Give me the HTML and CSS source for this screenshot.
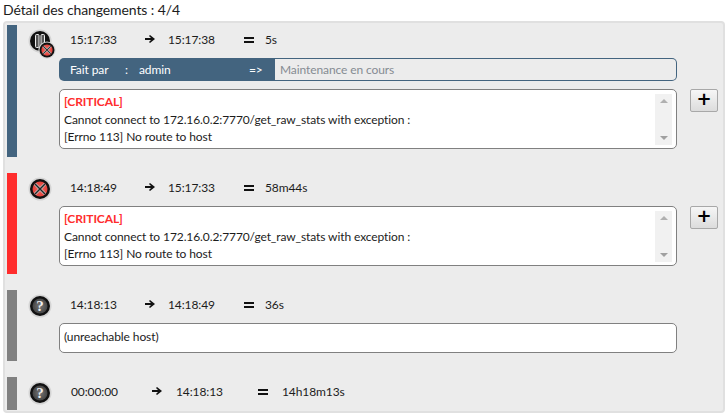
FILE: index.html
```html
<!DOCTYPE html>
<html lang="fr">
<head>
<meta charset="UTF-8">
<meta name="viewport" content="width=device-width, initial-scale=1.0">
<title>Détail des changements</title>
<link rel="stylesheet" href="styles.css">
</head>
<body>

<h4 class="title">Détail des changements : 4/4</h4>

<svg class="defs" width="0" height="0">
    <defs>
        <radialGradient id="red-fill"><stop offset="0" stop-color="#ff6a60"/><stop offset="1" stop-color="#e0403a"/></radialGradient>
        <radialGradient id="grey-fill"><stop offset="0" stop-color="#777"/><stop offset="1" stop-color="#444"/></radialGradient>
        <symbol id="icon-error" viewBox="0 0 24 24">
            <circle cx="12" cy="12" r="11.5" fill="#d4d4d4"/>
            <circle cx="12" cy="12" r="10" fill="#111"/>
            <circle cx="12" cy="12" r="7.5" fill="url(#red-fill)"/>
            <path d="M7 7l10 10M17 7L7 17" stroke="#bbb" stroke-width="3"/>
            <path d="M7 7l10 10M17 7L7 17" stroke="#222" stroke-width="1.4"/>
        </symbol>
        <symbol id="icon-unknown" viewBox="0 0 24 24">
            <circle cx="12" cy="12" r="11.5" fill="#d4d4d4"/>
            <circle cx="12" cy="12" r="10" fill="#111"/>
            <circle cx="12" cy="12" r="7.5" fill="url(#grey-fill)"/>
            <text x="12" y="17" text-anchor="middle" class="icon-mark">?</text>
        </symbol>
        <symbol id="icon-pause" viewBox="0 0 24 24">
            <circle cx="12" cy="12" r="11.5" fill="#d4d4d4"/>
            <circle cx="12" cy="12" r="10" fill="#111"/>
            <rect x="7.5" y="5.5" width="3.5" height="13" rx="1" fill="#555" stroke="#eee"/>
            <rect x="13" y="5.5" width="3.5" height="13" rx="1" fill="#555" stroke="#eee"/>
        </symbol>
        <symbol id="arrow" viewBox="0 0 10 8">
            <path d="M0 3h6L4 1l1-1 5 4-5 4-1-1 2-2H0z" fill="#111"/>
        </symbol>
    </defs>
</svg>

<div class="panel">

    <div class="change change-maint">
        <div class="state">
            <svg class="state-icon"><use href="#icon-pause"/></svg>
            <svg class="state-badge"><use href="#icon-error"/></svg>
        </div>
        <div class="change-body">
            <div class="times">
                <span class="t-start">15:17:33</span>
                <svg class="t-arrow"><use href="#arrow"/></svg>
                <span class="t-end">15:17:38</span>
                <span class="t-equal"></span>
                <span>5s</span>
            </div>
            <div class="done-by">
                <div class="done-label">
                    <span class="done-what">Fait par</span>
                    <span class="done-colon">:</span>
                    <span class="done-user">admin</span>
                    <span>=&gt;</span>
                </div>
                <div class="done-comment">Maintenance en cours</div>
            </div>
            <div class="output-row">
                <div class="output output-tall">
                    <div class="output-text">
                        <span class="critical">[CRITICAL]</span><br>
                        Cannot connect to 172.16.0.2:7770/get_raw_stats with exception :<br>
                        [Errno 113] No route to host
                    </div>
                    <div class="scroll"><span class="scroll-up"></span><span class="scroll-down"></span></div>
                </div>
                <button class="more">+</button>
            </div>
        </div>
    </div>

    <div class="change change-crit">
        <div class="state">
            <svg class="state-icon"><use href="#icon-error"/></svg>
        </div>
        <div class="change-body">
            <div class="times">
                <span class="t-start">14:18:49</span>
                <svg class="t-arrow"><use href="#arrow"/></svg>
                <span class="t-end">15:17:33</span>
                <span class="t-equal"></span>
                <span>58m44s</span>
            </div>
            <div class="output-row">
                <div class="output output-tall">
                    <div class="output-text">
                        <span class="critical">[CRITICAL]</span><br>
                        Cannot connect to 172.16.0.2:7770/get_raw_stats with exception :<br>
                        [Errno 113] No route to host
                    </div>
                    <div class="scroll"><span class="scroll-up"></span><span class="scroll-down"></span></div>
                </div>
                <button class="more">+</button>
            </div>
        </div>
    </div>

    <div class="change change-unknown">
        <div class="state">
            <svg class="state-icon"><use href="#icon-unknown"/></svg>
        </div>
        <div class="change-body">
            <div class="times">
                <span class="t-start">14:18:13</span>
                <svg class="t-arrow"><use href="#arrow"/></svg>
                <span class="t-end">14:18:49</span>
                <span class="t-equal"></span>
                <span>36s</span>
            </div>
            <div class="output-row">
                <div class="output">
                    <div class="output-text">(unreachable host)</div>
                </div>
            </div>
        </div>
    </div>

    <div class="change change-unknown change-last">
        <div class="state">
            <svg class="state-icon"><use href="#icon-unknown"/></svg>
        </div>
        <div class="change-body">
            <div class="times times-wide">
                <span class="t-start">00:00:00</span>
                <svg class="t-arrow"><use href="#arrow"/></svg>
                <span class="t-end">14:18:13</span>
                <span class="t-equal"></span>
                <span>14h18m13s</span>
            </div>
        </div>
    </div>

</div>

</body>
</html>
```

FILE: styles.css
```css
body { margin: 0; padding: 0 1px 0 3px; font-family: Lato, sans-serif; font-size: 12px; letter-spacing: -0.1px; color: #1c1c1c; background-color: #fff; }
.defs { position: absolute; }
.title { margin: 0; height: 21px; line-height: 20px; font-size: 14px; font-weight: normal; }

.panel {
    display: flex;
    flex-direction: column;
    gap: 16px;
    padding: 2px 3px 1px 2px;
    background-color: #ececec;
    border: 2px solid #e0e0e0;
    border-radius: 4px;
}

.change { display: flex; border-left: 10px solid #808080; padding: 4px 0 0; }
.change-maint { border-left-color: #43647f; }
.change-crit { border-left-color: #ff2d2d; }
.change-last .times { margin-bottom: 7px; }

.state { position: relative; width: 42px; flex-shrink: 0; }
.state-icon { position: absolute; left: 11px; top: 0; width: 24px; height: 24px; }
.state-badge { position: absolute; left: 21px; top: 12px; width: 18px; height: 18px; }
.icon-mark { font-family: "Liberation Serif", serif; font-size: 15px; font-weight: bold; fill: #eee; }

.change-body { flex: 1; display: flex; flex-direction: column; }

.times { display: flex; align-items: center; height: 22px; box-sizing: border-box; padding-bottom: 2px; margin-bottom: 7px; padding-left: 11px; }
.t-start { width: 75px; }
.t-arrow { width: 10px; height: 8px; margin-right: 13px; }
.t-end { width: 76px; }
.t-equal {
    width: 10px;
    height: 6px;
    margin-top: 2px;
    margin-right: 11px;
    border-top: 2px solid #111;
    border-bottom: 2px solid #111;
    box-sizing: border-box;
}
.times-wide { padding-left: 12px; }
.times-wide .t-start { width: 81px; }
.times-wide .t-arrow { margin-right: 14px; }
.times-wide .t-end { width: 82px; }
.times-wide .t-equal { margin-right: 14px; }

.done-by { display: flex; height: 23px; margin: 0 43px 8px 0; line-height: 21px; }
.done-label {
    display: flex;
    width: 216px;
    padding-left: 11px;
    box-sizing: border-box;
    background-color: #43647f;
    color: #fff;
    border-radius: 5px 0 0 5px;
    line-height: 23px;
}
.done-what { width: 55px; }
.done-colon { width: 14px; }
.done-user { width: 110px; }
.done-comment {
    flex: 1;
    padding-left: 5px;
    color: #858b92;
    border: 1px solid #43647f;
    border-left: 0;
    border-radius: 0 5px 5px 0;
}

.output-row { display: flex; align-items: flex-start; margin-bottom: 8px; }
.output {
    display: flex;
    justify-content: space-between;
    width: 618px;
    height: 30px;
    box-sizing: border-box;
    padding: 4px;
    background-color: #fff;
    border: 1px solid #808080;
    border-radius: 5px;
    line-height: 17.5px;
}
.output-tall { height: 60px; padding-bottom: 3px; }
.output-tall .output-text { margin-top: -1px; }
.critical { color: #ff2d2d; font-weight: bold; }

.scroll {
    display: flex;
    flex-direction: column;
    justify-content: space-between;
    align-items: center;
    width: 17px;
    padding: 5px 0;
    box-sizing: border-box;
    background-color: #f1f1f1;
}
.scroll-up { border: 4px solid transparent; border-top: 0; border-bottom: 4px solid #b0b0b0; }
.scroll-down { border: 4px solid transparent; border-bottom: 0; border-top: 4px solid #a0a0a0; }

.more {
    width: 28px;
    height: 23px;
    margin-left: 13px;
    padding: 0 0 3px;
    font-family: "DejaVu Sans", sans-serif;
    font-size: 18px;
    font-weight: bold;
    line-height: 18px;
    color: #000;
    background: linear-gradient(#f6f6f6, #dcdcdc);
    border: 1px solid #a8a8a8;
    border-radius: 2px;
}
```
